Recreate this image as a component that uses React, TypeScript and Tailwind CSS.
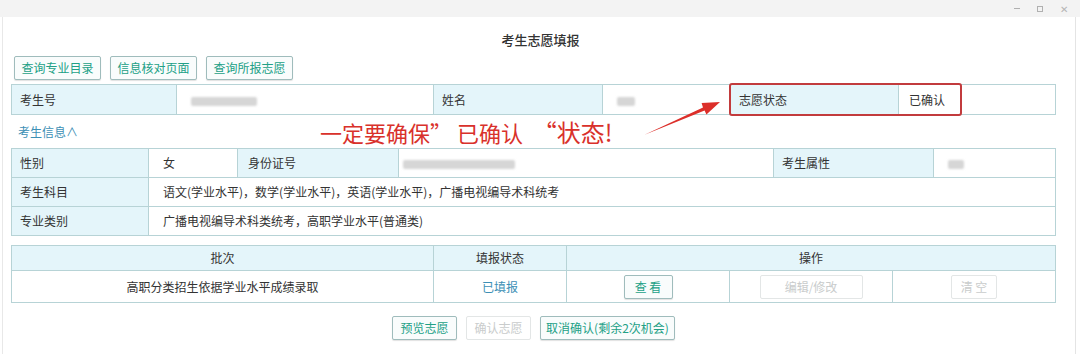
import React from 'react';

const font = { fontFamily: '"Noto Sans CJK SC", "Noto Sans", sans-serif' };

const TopButton = ({ label, disabled = false, w }: { label: string; disabled?: boolean; w: string }) => (
  <button
    className={`h-[24px] ${w} border rounded-[2px] text-[12px] leading-none ${
      disabled
        ? 'border-[#e3e6e6] text-[#c9cccc] bg-white'
        : 'border-[#9fbcbc] text-[#22a086] bg-[#f9fcfc] shadow-[0_1px_1px_rgba(0,0,0,0.12)]'
    }`}
  >
    {label}
  </button>
);

const Blur = ({ w }: { w: string }) => <span className={`inline-block h-[9px] ${w} bg-[#d6d6d6] rounded-[2px] blur-[1px] align-middle`} />;

const lbl = 'bg-[#e4f5fa] border border-[#b7d3d6] px-[8px] text-left font-normal';
const val = 'bg-white border border-[#b7d3d6] px-[14px] text-left';

export default function App() {
  return (
    <div className="relative w-[1080px] h-[354px] bg-white overflow-hidden text-[#333]" style={font}>
      {/* title bar */}
      <div className="h-[17px] bg-[#f3f3f3] flex justify-end items-center gap-[17px] pr-[12px] text-[#b5b5b5]">
        <span className="w-[6px] h-px bg-[#b0b0b0]" />
        <span className="w-[6px] h-[6px] border border-[#b0b0b0]" />
        <span className="text-[10px] leading-none">✕</span>
      </div>
      <div className="absolute left-[2px] top-[17px] bottom-0 w-px bg-[#e8e8e8]" />
      <div className="absolute right-[4px] top-[17px] bottom-0 w-px bg-[#e4e4e4]" />

      <div className="pl-[11px] pr-[24px]">
        <div className="pt-[15px] text-center text-[13px] leading-[16px] text-[#333] font-medium pl-[14px]">考生志愿填报</div>

        <div className="flex gap-[9px] pl-[3px] mt-[8px]">
          <TopButton label="查询专业目录" w="w-[87px]" />
          <TopButton label="信息核对页面" w="w-[87px]" />
          <TopButton label="查询所报志愿" w="w-[87px]" />
        </div>

        {/* row 1 */}
        <div className="relative mt-[4px]">
          <table className="w-full border-collapse text-[12px] table-fixed">
            <tbody>
              <tr className="h-[30px]">
                <td className={`${lbl} w-[165px]`}>考生号</td>
                <td className={`${val} w-[257px]`}><Blur w="w-[66px]" /></td>
                <td className={`${lbl} w-[169px]`}>姓名</td>
                <td className={`${val} w-[128px]`}><Blur w="w-[18px]" /></td>
                <td className={`${lbl} w-[168px]`}>志愿状态</td>
                <td className={`${val} pl-[10px]`}>已确认</td>
              </tr>
            </tbody>
          </table>
          <div className="absolute left-[718px] top-[-1px] w-[233px] h-[33px] border-2 border-[#c23b3d] rounded-[3px]" />
        </div>

        {/* info toggle + annotation */}
        <div className="relative h-[33px] flex items-center">
          <span className="pl-[7px] text-[12px] text-[#3d8fb5]">考生信息∧</span>
          <span className="absolute left-[309px] top-[3px] text-[22px] leading-[28px] text-[#d9312b] whitespace-nowrap">
            一定要确保”&nbsp;已确认&nbsp;&nbsp;<span className="text-[24px]">“状态!</span>
          </span>
          <svg className="absolute left-[620px] top-[-15px]" width="100" height="40" viewBox="620 -15 100 40">
            <polygon points="633,20 692,-7.6 690.6,-12 709,-13 695.4,-0.5 693.6,-4.6" fill="#dc2f2a" />
          </svg>
        </div>

        {/* info table */}
        <table className="w-full border-collapse text-[12px] table-fixed">
          <tbody>
            <tr className="h-[29px]">
              <td className={`${lbl} w-[137px]`}>性别</td>
              <td className={`${val} w-[89px]`}>女</td>
              <td className={`${lbl} w-[161px] pl-[10px]`}>身份证号</td>
              <td className={`${val} w-[375px] pl-[4px]`}><Blur w="w-[112px]" /></td>
              <td className={`${lbl} w-[160px]`}>考生属性</td>
              <td className={`${val}`}><Blur w="w-[16px]" /></td>
            </tr>
            <tr className="h-[29px]">
              <td className={lbl}>考生科目</td>
              <td className={val} colSpan={5}>语文(学业水平)，数学(学业水平)，英语(学业水平)，广播电视编导术科统考</td>
            </tr>
            <tr className="h-[29px]">
              <td className={lbl}>专业类别</td>
              <td className={val} colSpan={5}>广播电视编导术科类统考，高职学业水平(普通类)</td>
            </tr>
          </tbody>
        </table>

        {/* batch table */}
        <table className="w-full border-collapse text-[12px] table-fixed mt-[9px]">
          <tbody>
            <tr className="h-[25px] bg-[#e4f5fa] text-center">
              <td className="border border-[#b7d3d6] w-[422px]">批次</td>
              <td className="border border-[#b7d3d6] w-[133px]">填报状态</td>
              <td className="border border-[#b7d3d6]" colSpan={3}>操作</td>
            </tr>
            <tr className="h-[32px] text-center">
              <td className="border border-[#b7d3d6]">高职分类招生依据学业水平成绩录取</td>
              <td className="border border-[#b7d3d6] text-[#3d8fb5]">已填报</td>
              <td className="border border-[#b7d3d6] w-[156px]">
                <div className="flex justify-center"><TopButton label="查 看" w="w-[49px]" /></div>
              </td>
              <td className="border border-[#b7d3d6] w-[171px]">
                <div className="flex justify-center"><TopButton label="编辑/修改" w="w-[103px]" disabled /></div>
              </td>
              <td className="border border-[#b7d3d6]">
                <div className="flex justify-center"><TopButton label="清 空" w="w-[46px]" disabled /></div>
              </td>
            </tr>
          </tbody>
        </table>

        <div className="flex justify-center gap-[9px] mt-[13px]">
          <TopButton label="预览志愿" w="w-[65px]" />
          <TopButton label="确认志愿" w="w-[65px]" disabled />
          <TopButton label="取消确认(剩余2次机会)" w="w-[135px]" />
        </div>
      </div>
    </div>
  );
}
